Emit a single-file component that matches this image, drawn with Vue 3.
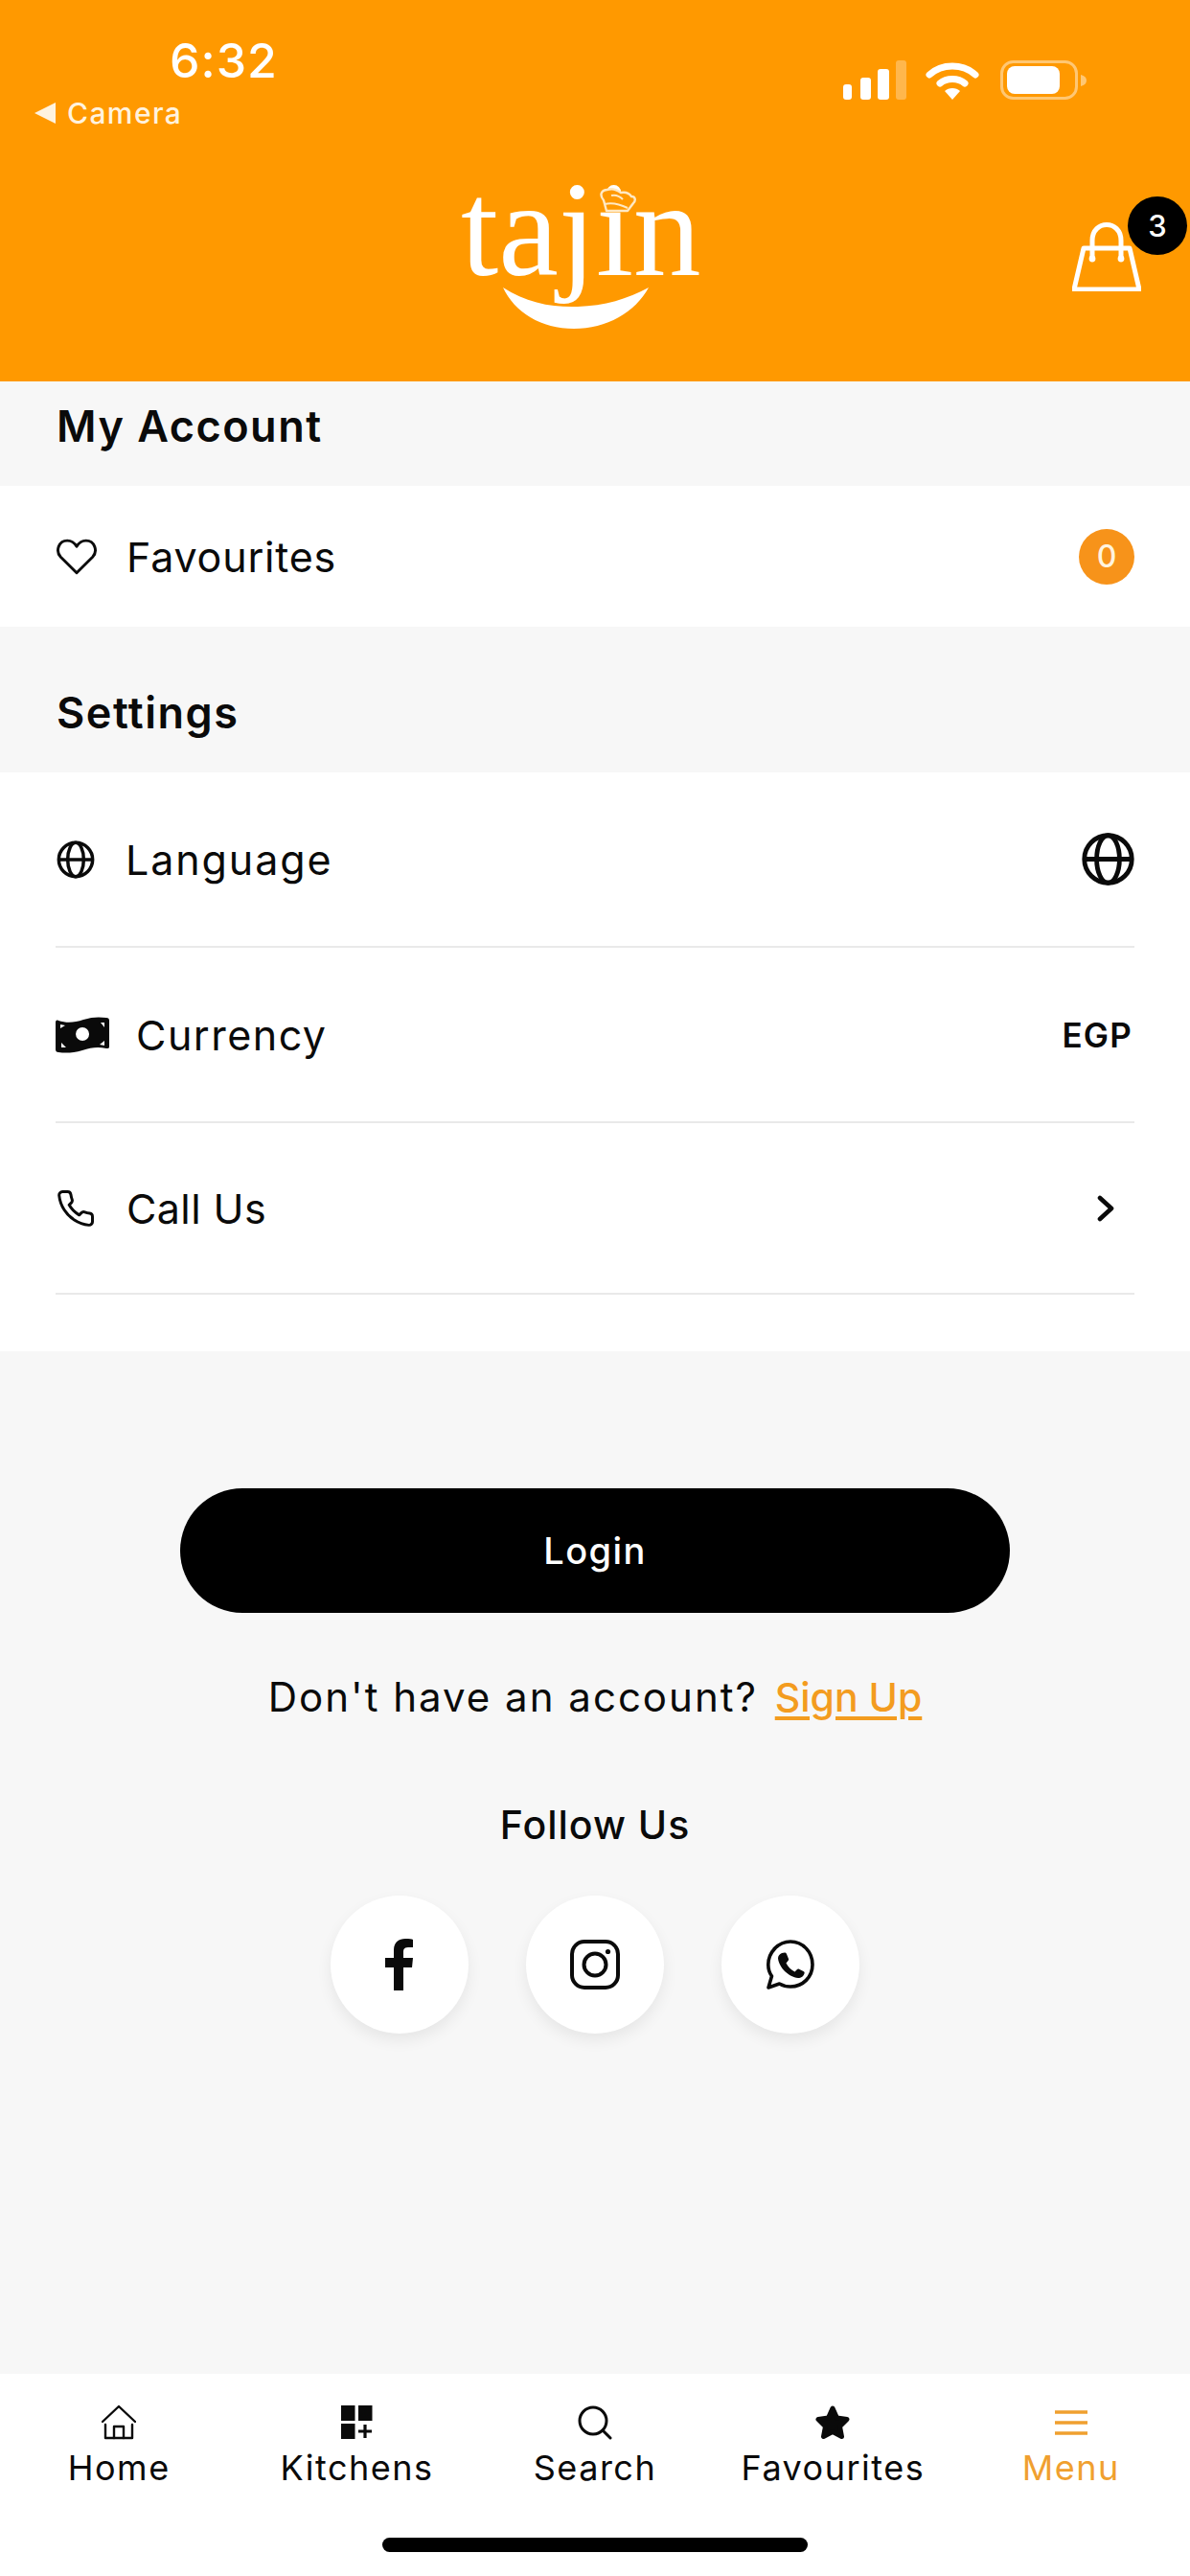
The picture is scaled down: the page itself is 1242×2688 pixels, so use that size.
<script setup>
const navItems = [
  { key: 'home', label: 'Home' },
  { key: 'kitchens', label: 'Kitchens' },
  { key: 'search', label: 'Search' },
  { key: 'favourites', label: 'Favourites' },
  { key: 'menu', label: 'Menu', active: true },
]
</script>

<template>
  <div class="page">
    <header class="header">
      <div class="status">
        <div class="status-left">
          <div class="time">6:32</div>
          <div class="back"><span class="tri"></span><span>Camera</span></div>
        </div>
        <div class="status-right">
          <svg class="signal" width="66" height="41" viewBox="0 0 66 41">
            <rect x="0" y="25" width="9" height="16" rx="3" fill="#fff" />
            <rect x="18" y="18" width="11" height="23" rx="3" fill="#fff" />
            <rect x="36" y="9" width="12" height="32" rx="3" fill="#fff" />
            <rect x="55" y="0" width="11" height="41" rx="3" fill="#fff" opacity=".3" />
          </svg>
          <svg class="wifi" width="56" height="41" viewBox="0 0 56 41">
            <path d="M4 15 C17 3 39 3 52 15" fill="none" stroke="#fff" stroke-width="7" stroke-linecap="round" />
            <path d="M15 24 C22 18 34 18 41 24" fill="none" stroke="#fff" stroke-width="7" stroke-linecap="round" />
            <path d="M20 32 C24 28 32 28 36 32 L28 41 Z" fill="#fff" />
          </svg>
          <svg class="battery" width="91" height="41" viewBox="0 0 91 41">
            <rect x="1.5" y="1.5" width="78" height="38" rx="12" fill="none" stroke="#fff" stroke-opacity=".45" stroke-width="3" />
            <rect x="7" y="6" width="55" height="29" rx="8" fill="#fff" />
            <path d="M84 15 C88 16 90 18 90 21 C90 24 88 26 84 27 Z" fill="#fff" opacity=".45" />
          </svg>
        </div>
      </div>
      <div class="brand-row">
        <div class="logo">
          <span class="logo-text">tajin</span>
          <svg class="hat" width="40" height="28" viewBox="0 0 40 28">
            <path d="M5 13 C0 7 3 2 9 2 C14 0 19 2 23 5 C28 4 32 6 34 9 C38 9 39 13 36 16 L30 24 L8 24 Z" fill="#ff9900" stroke="#ffe9c4" stroke-width="2.4" stroke-linejoin="round" />
            <path d="M6 17 C13 15 20 16 30 21 M13 8 C17 7 22 9 25 12" fill="none" stroke="#ffe9c4" stroke-width="2" />
          </svg>
          <svg class="smile" width="152" height="44" viewBox="0 0 152 44">
            <path d="M0 0 C24 16 52 21 78 20 C106 19 130 12 152 0 C138 26 108 43 74 43 C40 43 12 26 0 0 Z" fill="#fff" />
          </svg>
        </div>
        <div class="cart">
          <svg width="72" height="72" viewBox="0 0 72 72" fill="none" stroke="#fff" stroke-width="5" stroke-linecap="round" stroke-linejoin="round">
            <path d="M12 27 H60 L70 70 H2 Z" />
            <path d="M21 36 V19 C21 -3 51 -3 51 19 V36" />
            <circle cx="21" cy="38" r="2.4" fill="#fff" stroke-width="2" />
            <circle cx="51" cy="38" r="2.4" fill="#fff" stroke-width="2" />
          </svg>
          <span class="cart-badge">3</span>
        </div>
      </div>
    </header>

    <main class="main">
      <h2 class="title title-account">My Account</h2>
      <section class="band">
        <div class="row row-fav">
          <div class="row-label">
            <svg class="ic-heart" width="44" height="38" viewBox="0 0 24 21" fill="none" stroke="#0a0a0a" stroke-width="1.6" stroke-linejoin="round">
              <path d="M12 19.8 L2.8 10.6 C-0.4 7.2 1.6 1.2 6.6 1.2 C9 1.2 10.8 2.6 12 4.6 C13.2 2.6 15 1.2 17.4 1.2 C22.4 1.2 24.4 7.2 21.2 10.6 Z" />
            </svg>
            <span class="gap-a label-fav">Favourites</span>
          </div>
          <span class="count">0</span>
        </div>
      </section>

      <h2 class="title title-settings">Settings</h2>
      <section class="band band-settings">
        <div class="row row-lang">
          <div class="row-label">
            <svg class="ic-globe" width="40" height="40" viewBox="0 0 24 24" fill="none" stroke="#0a0a0a" stroke-width="2.1">
              <circle cx="12" cy="12" r="10.6" />
              <ellipse cx="12" cy="12" rx="5" ry="10.6" />
              <path d="M1.4 12 H22.6" />
            </svg>
            <span class="gap-b label-lang">Language</span>
          </div>
          <svg width="55" height="55" viewBox="0 0 24 24" fill="none" stroke="#0a0a0a" stroke-width="2.1">
            <circle cx="12" cy="12" r="10.8" />
            <ellipse cx="12" cy="12" rx="5.2" ry="10.8" />
            <path d="M1.2 12 H22.8" />
          </svg>
        </div>
        <div class="row row-cur">
          <div class="row-label">
            <svg width="56" height="38" viewBox="0 0 56 38">
              <path fill-rule="evenodd" fill="#0a0a0a" d="M3 4 C12 7 20 6 29 3 C38 0 46 0 53 1 C55 1 56 2 56 4 V31 C56 33 55 33 53 33 C44 31 37 32 28 35 C18 38 10 38 3 37 C1 37 0 36 0 34 V6 C0 4 1 3 3 4 Z M28 11 A7 7 0 1 0 28.1 25 A7 7 0 1 0 28 11 Z M5 8 L5 12 L10 9 Z M47 6 L51 11 L51 6 Z M6 27 L6 32 L11 32 Z M46 29 L51 30 L51 25 Z" />
            </svg>
            <span class="gap-c label-cur">Currency</span>
          </div>
          <span class="egp">EGP</span>
        </div>
        <div class="row row-call">
          <div class="row-label">
            <svg class="ic-phone" width="42" height="42" viewBox="0 0 24 24" fill="none" stroke="#0a0a0a" stroke-width="1.7" stroke-linejoin="round" stroke-linecap="round">
              <path d="M22 16.92v3a2 2 0 0 1-2.18 2 19.79 19.79 0 0 1-8.63-3.07 19.5 19.5 0 0 1-6-6 19.79 19.79 0 0 1-3.07-8.67A2 2 0 0 1 4.11 2h3a2 2 0 0 1 2 1.72 12.84 12.84 0 0 0 .7 2.81 2 2 0 0 1-.45 2.11L8.09 9.91a16 16 0 0 0 6 6l1.27-1.27a2 2 0 0 1 2.11-.45 12.84 12.84 0 0 0 2.81.7A2 2 0 0 1 22 16.92z" />
            </svg>
            <span class="gap-b label-call">Call Us</span>
          </div>
          <svg class="chev" width="20" height="30" viewBox="0 0 20 30" fill="none" stroke="#0a0a0a" stroke-width="4.6" stroke-linecap="round" stroke-linejoin="round">
            <path d="M4 4 L16 15 L4 26" />
          </svg>
        </div>
      </section>

      <div class="auth">
        <button class="login" type="button">Login</button>
        <p class="signup">Don't have an account? <a class="signup-link">Sign Up</a></p>
        <h3 class="follow">Follow Us</h3>
        <div class="socials">
          <div class="social">
            <svg width="30" height="54" viewBox="0 0 30 54">
              <path fill="#0a0a0a" d="M9 54 V30 H0 V20 H9 V12 C9 4 14 0 21 0 C25 0 28 0 29 1 V9 H24 C20 9 19 11 19 14 V20 H29 L28 30 H19 V54 Z" />
            </svg>
          </div>
          <div class="social">
            <svg width="52" height="52" viewBox="0 0 52 52" fill="none" stroke="#0a0a0a" stroke-width="4">
              <rect x="2" y="2" width="48" height="48" rx="13" />
              <circle cx="26" cy="26" r="11.5" />
              <circle cx="39.5" cy="12.5" r="2.6" fill="#0a0a0a" stroke="none" />
            </svg>
          </div>
          <div class="social">
            <svg width="50" height="52" viewBox="0 0 50 52" fill="none" stroke="#0a0a0a">
              <path stroke-width="3.6" stroke-linejoin="round" d="M2 50 L5.5 38 C2.5 34 1.8 30 1.8 26 C1.8 13 12.5 2 25 2 C38 2 48 13 48 26 C48 39 38 49 25 49 C20.5 49 17 48 13.5 46 Z" />
              <path fill="#0a0a0a" stroke="none" d="M16 14 L19 13.5 C20 13.5 20.5 14 21 15 L23 20 C23.3 21 23 21.5 22.5 22 L20.5 24.5 C22.5 28.5 25.5 31.5 29.5 33.5 L32 31 C32.5 30.5 33 30.3 34 30.7 L38.5 33 C39.5 33.5 39.8 34 39.6 35 C39 38 36 40 33 40 C23 39 13 29 12 19.5 C12 17 13.5 15 16 14 Z" />
            </svg>
          </div>
        </div>
      </div>
    </main>

    <nav class="nav">
      <div class="nav-items">
        <div v-for="item in navItems" :key="item.key" class="nav-item" :class="{ active: item.active }">
          <div class="nav-icon">
            <svg v-if="item.key === 'home'" width="36" height="36" viewBox="0 0 36 36" fill="none" stroke="#0a0a0a" stroke-width="2.4" stroke-linecap="round" stroke-linejoin="round">
              <path d="M1 17 L18 1 L35 17" />
              <path d="M4 20 V34 H32 V20" />
              <path d="M13 34 V22 H23 V34" />
            </svg>
            <svg v-else-if="item.key === 'kitchens'" width="33" height="36" viewBox="0 0 33 36">
              <rect x="0" y="0" width="14.5" height="16" fill="#0a0a0a" />
              <rect x="18" y="0" width="14.5" height="16" fill="#0a0a0a" />
              <rect x="0" y="19" width="14.5" height="16" fill="#0a0a0a" />
              <path d="M25 20 V34 M18 27 H32" stroke="#0a0a0a" stroke-width="3.2" fill="none" />
            </svg>
            <svg v-else-if="item.key === 'search'" width="36" height="36" viewBox="0 0 36 36" fill="none" stroke="#0a0a0a" stroke-width="3" stroke-linecap="round">
              <circle cx="16" cy="16" r="14" />
              <path d="M26 26 L34 34" />
            </svg>
            <svg v-else-if="item.key === 'favourites'" width="38" height="38" viewBox="0 0 38 38">
              <path fill="#0a0a0a" stroke="#0a0a0a" stroke-width="5" stroke-linejoin="round" d="M19 4 L23.5 14 L34 15.5 L26.5 23 L28.5 33.5 L19 28.5 L9.5 33.5 L11.5 23 L4 15.5 L14.5 14 Z" />
            </svg>
            <svg v-else width="34" height="26" viewBox="0 0 34 26" fill="none" stroke="#f0a02f" stroke-width="3.4">
              <path d="M0 2 H34 M0 13 H34 M0 24 H34" />
            </svg>
          </div>
          <span class="nav-label">{{ item.label }}</span>
        </div>
      </div>
      <div class="home-bar"></div>
    </nav>
  </div>
</template>

<style>
html, body { margin: 0; padding: 0; background: #f7f7f7; }
</style>

<style scoped>
.page {
  width: 1242px;
  height: 2688px;
  display: flex;
  flex-direction: column;
  background: #f7f7f7;
  color: #0a0a0a;
  font-family: Inter, "Noto Sans", sans-serif;
  overflow: hidden;
}
.header {
  height: 398px;
  flex: none;
  background: #ff9900;
  color: #fff;
  box-sizing: border-box;
  padding-top: 35px;
}
.status {
  height: 160px;
  display: flex;
  justify-content: space-between;
  align-items: flex-start;
}
.status-left { padding-left: 36px; }
.time {
  margin-left: 141px;
  font-size: 50px;
  font-weight: 500;
  letter-spacing: 1px;
  line-height: 56px;
  width: 120px;
}
.back {
  margin-top: 9px;
  display: flex;
  align-items: center;
  gap: 12px;
  font-size: 30px;
  line-height: 36px;
  font-weight: 500;
  letter-spacing: 1.4px;
  color: #fff3df;
}
.tri {
  width: 0;
  height: 0;
  border-top: 11px solid transparent;
  border-bottom: 11px solid transparent;
  border-right: 22px solid #fff3df;
}
.status-right {
  display: flex;
  align-items: flex-start;
  padding: 28px 107px 0 0;
}
.wifi { margin-left: 20px; }
.battery { margin-left: 22px; }
.brand-row { display: flex; align-items: flex-start; }
.logo {
  position: relative;
  width: 251px;
  height: 150px;
  margin-left: 481px;
}
.logo-text {
  display: block;
  margin-top: -26px;
  font-family: "Liberation Serif", serif;
  font-size: 141px;
  line-height: 141px;
  color: #fff;
  font-weight: 400;
}
.hat { position: absolute; left: 144px; top: 1px; }
.smile { position: absolute; left: 44px; top: 105px; }
.cart {
  position: relative;
  width: 72px;
  height: 72px;
  margin: 37px 0 0 387px;
}
.cart svg { display: block; }
.cart-badge {
  position: absolute;
  left: 58px;
  top: -27px;
  width: 62px;
  height: 61px;
  border-radius: 50%;
  background: #000;
  color: #fff;
  font-size: 31px;
  font-weight: 500;
  display: flex;
  align-items: center;
  justify-content: center;
}
.main { flex: 1; display: flex; flex-direction: column; }
.title {
  margin: 0;
  padding: 0 59px;
  font-size: 45px;
  font-weight: 600;
  letter-spacing: 1.5px;
  line-height: 54px;
  color: #0a0a0a;
}
.title-account { padding-top: 20px; padding-bottom: 35px; }
.title-settings { padding-top: 63px; padding-bottom: 35px; }
.band { background: #fff; }
.band-settings { padding-bottom: 59px; }
.row {
  margin: 0 58px;
  display: flex;
  align-items: center;
  justify-content: space-between;
  box-sizing: border-box;
  font-size: 43px;
  font-weight: 400;
}
.row-fav { height: 147px; }
.row-lang { height: 183px; border-bottom: 2px solid #e9e9e9; }
.row-cur { height: 183px; border-bottom: 2px solid #e9e9e9; }
.row-call { height: 179px; border-bottom: 2px solid #e9e9e9; }
.row-label { display: flex; align-items: center; }
.row-label svg { flex: none; }
.label-fav { letter-spacing: 0.8px; }
.label-lang { letter-spacing: 1.9px; }
.label-cur { letter-spacing: 1.5px; }
.label-call { letter-spacing: 0.4px; }
.gap-a { margin-left: 30px; }
.gap-b { margin-left: 32px; }
.gap-c { margin-left: 28px; }
.ic-globe { margin-left: 1px; }
.ic-phone { margin-left: 0; }
.count {
  width: 58px;
  height: 58px;
  border-radius: 50%;
  background: #f7931a;
  color: #fff3df;
  display: flex;
  align-items: center;
  justify-content: center;
  font-size: 32px;
  font-weight: 500;
}
.egp { font-size: 35px; font-weight: 600; letter-spacing: 1.2px; margin-right: 2px; }
.chev { margin-right: 20px; }
.auth {
  display: flex;
  flex-direction: column;
  align-items: center;
  padding-top: 143px;
}
.login {
  width: 866px;
  height: 130px;
  border: 0;
  border-radius: 65px;
  background: #000;
  color: #fff;
  font-family: inherit;
  font-size: 38px;
  font-weight: 500;
  letter-spacing: 1.4px;
}
.signup {
  margin: 63px 0 0;
  font-size: 42px;
  letter-spacing: 2px;
  line-height: 50px;
  font-weight: 400;
}
.signup-link {
  margin-left: 4px;
  color: #f39c1f;
  font-size: 41px;
  letter-spacing: 0;
  font-weight: 500;
  text-decoration: underline;
  text-underline-offset: 5px;
}
.follow {
  margin: 83px 0 0;
  font-size: 41px;
  font-weight: 500;
  letter-spacing: 1px;
  line-height: 50px;
}
.socials {
  margin-top: 49px;
  display: flex;
  gap: 60px;
}
.social {
  width: 144px;
  height: 144px;
  border-radius: 50%;
  background: #fff;
  box-shadow: 0 7px 16px rgba(0, 0, 0, .07);
  display: flex;
  align-items: center;
  justify-content: center;
}
.nav {
  height: 211px;
  flex: none;
  background: #fff;
  display: flex;
  flex-direction: column;
  align-items: center;
}
.nav-items {
  width: 100%;
  display: grid;
  grid-template-columns: repeat(5, 1fr);
  padding-top: 31px;
}
.nav-item { display: flex; flex-direction: column; align-items: center; }
.nav-icon {
  height: 40px;
  display: flex;
  align-items: center;
  justify-content: center;
}
.nav-label { margin-top: 3px; font-size: 36px; letter-spacing: 1.5px; line-height: 48px; }
.nav-item.active .nav-label { color: #f0a02f; }
.home-bar {
  margin-top: 49px;
  width: 444px;
  height: 15px;
  border-radius: 8px;
  background: #000;
}
</style>
